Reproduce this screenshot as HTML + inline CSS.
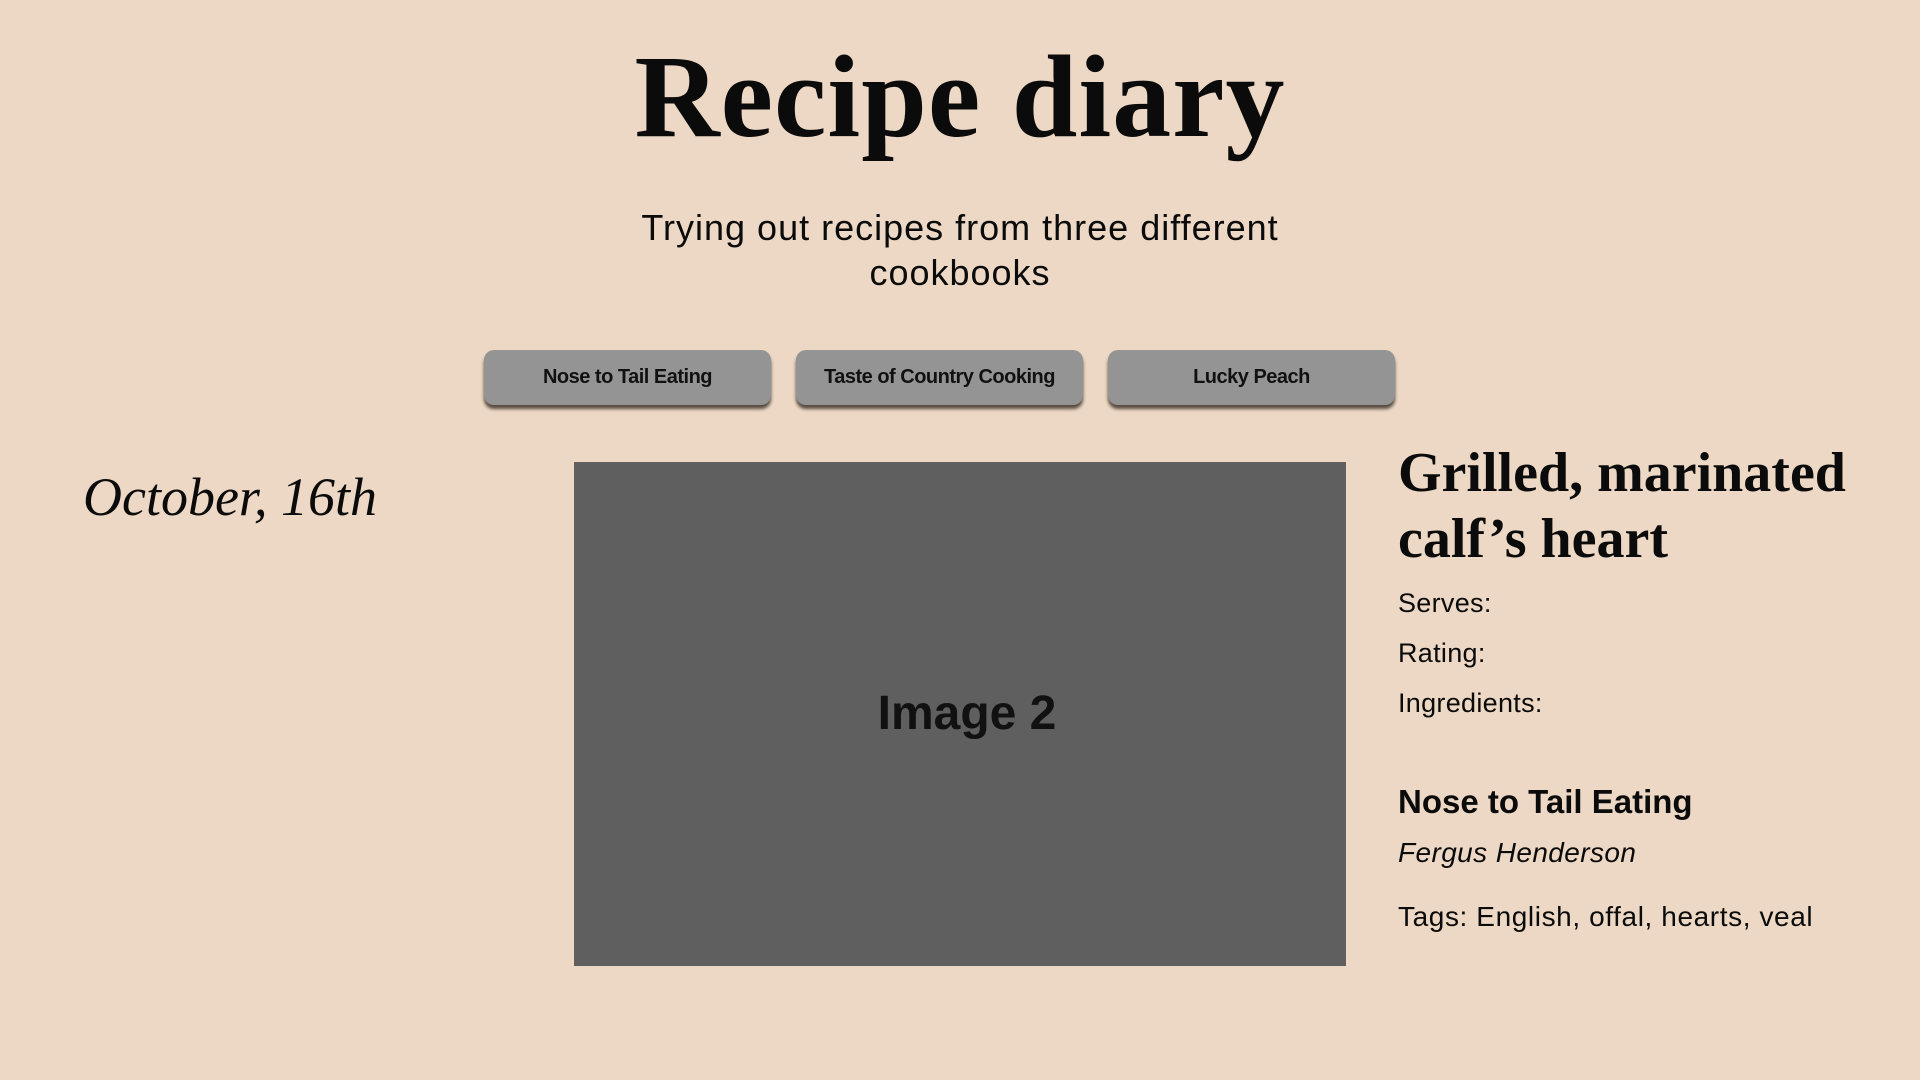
<!DOCTYPE html>
<html><head><meta charset="utf-8"><style>
html,body{margin:0;padding:0;width:1920px;height:1080px;overflow:hidden;background:#ecd8c4;color:#0b0b0b}
.a{position:absolute;white-space:nowrap}
.serif{font-family:"Liberation Serif",serif}
.sans{font-family:"Liberation Sans",sans-serif}
.btn{position:absolute;top:350px;width:287px;height:55px;background:#949494;border-radius:10px;box-shadow:0 4px 3px rgba(40,30,20,.75);font-family:"Liberation Sans",sans-serif;font-weight:bold;font-size:20px;letter-spacing:-0.5px;line-height:55px;text-align:center;color:#111}
</style></head><body>
<div class="a serif" style="left:0;width:1920px;text-align:center;top:38px;font-size:118px;line-height:1;font-weight:bold;letter-spacing:1px">Recipe diary</div>
<div class="a sans" style="left:0;width:1920px;text-align:center;top:205px;font-size:36px;line-height:45px;letter-spacing:1px">Trying out recipes from three different<br>cookbooks</div>
<div class="btn" style="left:484px">Nose to Tail Eating</div>
<div class="btn" style="left:796px">Taste of Country Cooking</div>
<div class="btn" style="left:1108px">Lucky Peach</div>
<div class="a serif" style="left:83px;top:470px;font-size:54px;line-height:1;font-style:italic">October, 16th</div>
<div class="a" style="left:574px;top:462px;width:772px;height:504px;background:#5f5f5f"></div>
<div class="a sans" style="left:574px;width:786px;text-align:center;top:690px;font-size:48px;line-height:1;font-weight:bold;color:#111">Image 2</div>
<div class="a serif" style="left:1398px;top:440px;font-size:56px;line-height:66px;font-weight:bold">Grilled, marinated<br>calf’s heart</div>
<div class="a sans" style="left:1398px;top:590px;font-size:27px;line-height:1;letter-spacing:0.3px">Serves:</div>
<div class="a sans" style="left:1398px;top:640px;font-size:27px;line-height:1;letter-spacing:0.3px">Rating:</div>
<div class="a sans" style="left:1398px;top:690px;font-size:27px;line-height:1;letter-spacing:0.3px">Ingredients:</div>
<div class="a sans" style="left:1398px;top:785px;font-size:33px;line-height:1;font-weight:bold">Nose to Tail Eating</div>
<div class="a sans" style="left:1398px;top:839px;font-size:28px;line-height:1;font-style:italic;letter-spacing:0.4px">Fergus Henderson</div>
<div class="a sans" style="left:1398px;top:903px;font-size:28px;line-height:1;letter-spacing:0.6px">Tags: English, offal, hearts, veal</div>
</body></html>
